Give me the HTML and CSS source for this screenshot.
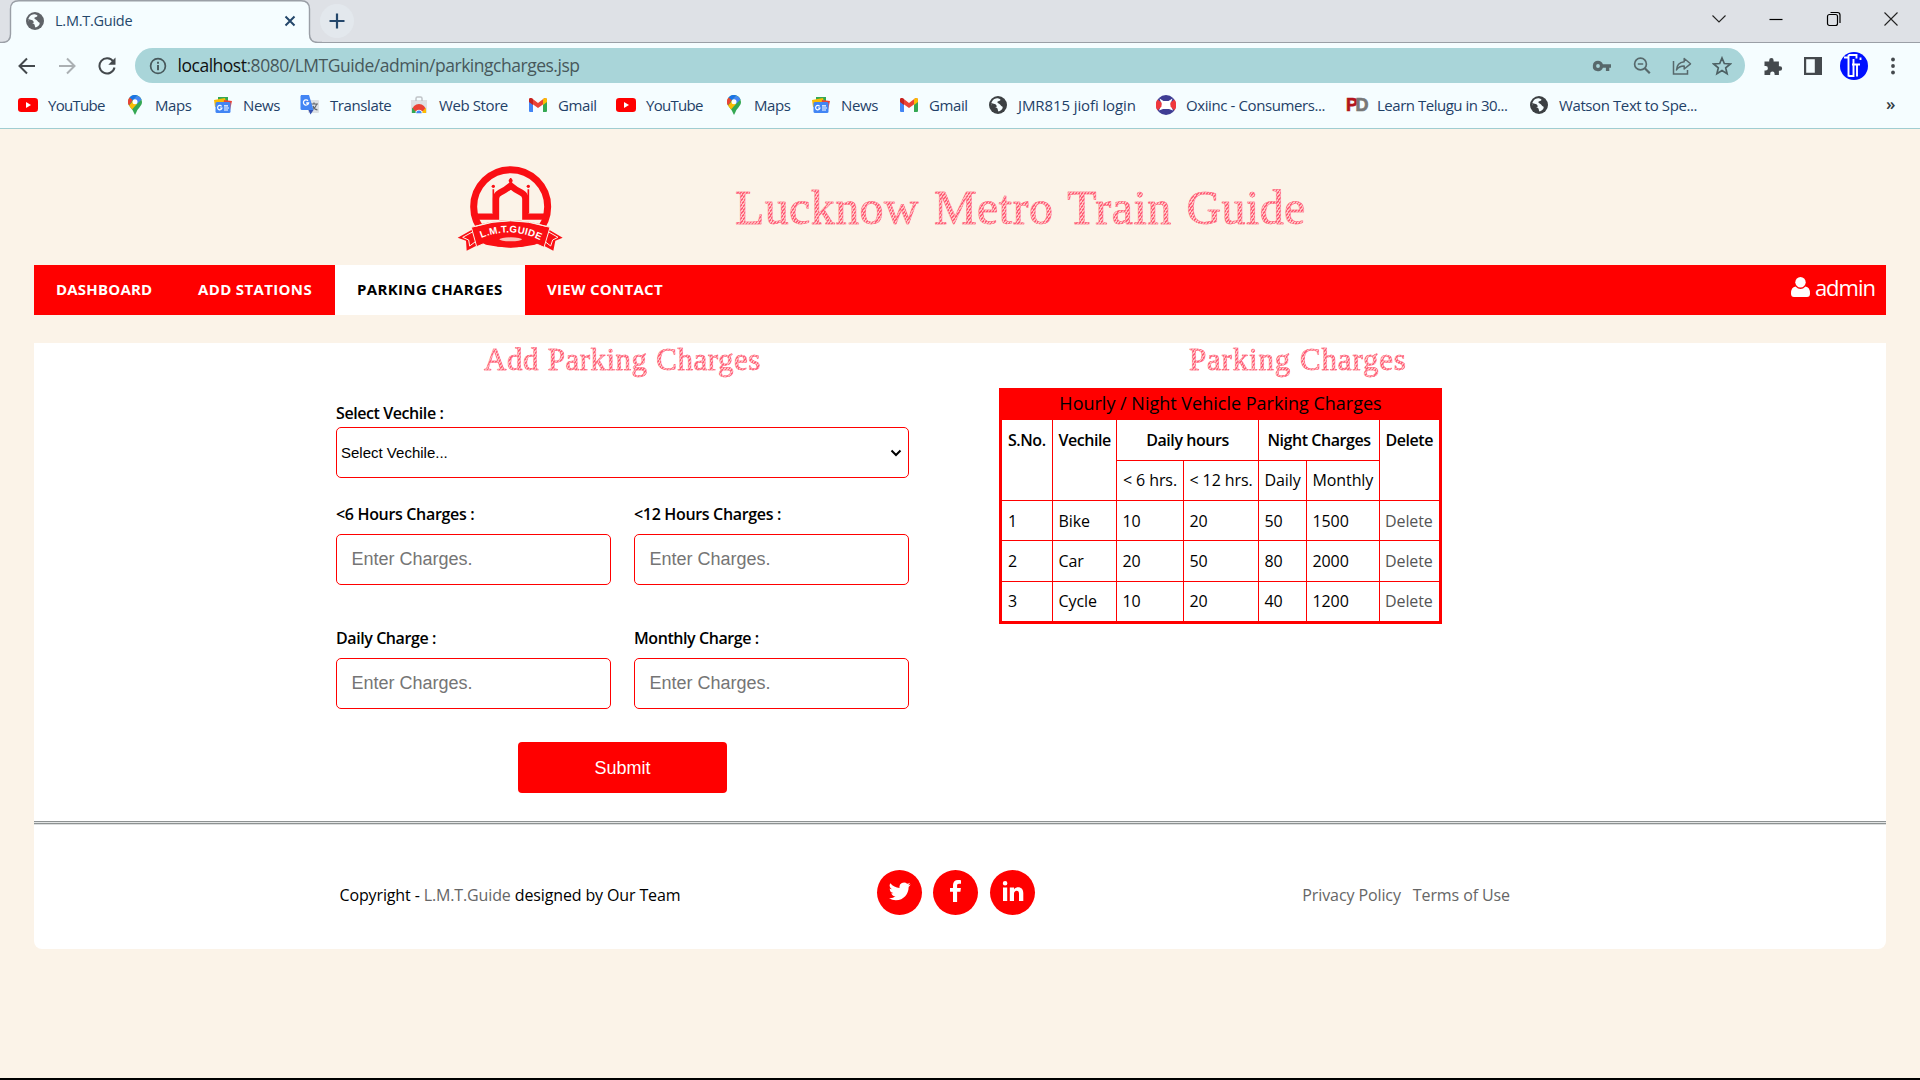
FILE: index.html
```html
<!DOCTYPE html>
<html lang="en">
<head>
<meta charset="utf-8">
<title>L.M.T.Guide</title>
<link rel="stylesheet" href="styles.css">
</head>
<body>
<svg class="defs" width="0" height="0" aria-hidden="true">
  <symbol id="globe" viewBox="0 0 18 18"><circle cx="9" cy="9" r="9" fill="currentColor"/><path d="M8 2.200c2 0 4.500 1.200 3 2.300-1 .8-2.600.6-2.600 1.700S11 7.500 11.500 9s2 1 2.200 2.200c.2 1.600-2 3.700-4 4.300-1-.2-.6-2.300-1.400-3.300-1-1.200-5.800-1.600-6-4C2.300 5 5.200 2.200 8 2.200z" fill="#f5fdff"/><path d="M2 7l4.500 1.200 1.500 2L5.500 12 3 11z" fill="currentColor"/></symbol>
  <symbol id="youtube" viewBox="0 0 20 14"><rect width="20" height="14" rx="3.200" fill="#f00"/><path d="M8 4l5 3-5 3z" fill="#fff"/></symbol>
  <symbol id="maps" viewBox="0 0 14 20"><path d="M7 0a7 7 0 0 0-7 7c0 4 4 6 5.500 10L7 20l1.500-3C10 13 14 11 14 7a7 7 0 0 0-7-7z" fill="#34a853"/><path d="M1 10.500L5 6l4 3-5 5.500z" fill="#fbbc04"/><path d="M1.500 2.600L4.700 5.300 9.200.4A7 7 0 0 0 1.500 2.600z" fill="#1a73e8"/><path d="M1.500 2.600A7 7 0 0 0 1 10.500L4.700 5.300z" fill="#ea4335"/><path d="M9.200.4A7 7 0 0 1 13.500 4.500L9 9 5 5z" fill="#4285f4"/><circle cx="7" cy="6.800" r="2.500" fill="#fff"/></symbol>
  <symbol id="news" viewBox="0 0 18 16"><rect x="4" width="10" height="9" fill="#34a853"/><path d="M0 3l11-2 2 8-12 1z" fill="#fbbc04"/><path d="M10 3l8 1-2 9-7-2z" fill="#ea4335"/><rect x="1.500" y="5" width="15" height="11" rx="1.500" fill="#4285f4"/><path d="M7.600 9.300A2.200 2.200 0 1 0 8 11H6M10 8.800h4M10 11h5M10 13h4" fill="none" stroke="#fff" stroke-width="1.200"/></symbol>
  <symbol id="gmail" viewBox="0 0 18 14"><path d="M0 2v11a1 1 0 0 0 1 1h3V5z" fill="#4285f4"/><path d="M18 2v11a1 1 0 0 1-1 1h-3V5z" fill="#34a853"/><path d="M0 2c0-2 2-2.500 3.500-1.300L9 5l5.500-4.300C16 -.5 18 0 18 2l-1 2.200L9 10 1 4.200z" fill="#ea4335"/><path d="M14 1.100l.5-.4C16-.5 18 0 18 2v2l-4 3z" fill="#fbbc04"/><path d="M0 2C0 0 2-.5 3.500.7l.5.4V7L0 4z" fill="#c5221f"/></symbol>
</svg>

<header class="browser">
  <div class="tabstrip">
    <svg class="tab-shape" width="322" height="43" viewBox="0 0 322 43"><path d="M-1 44V42.500H2Q10.500 42.500 10.500 34V9Q10.500.7 19 .7H301Q309.500.7 309.500 9V34Q309.500 42.500 318 42.500H323V44z" fill="#f5fdff" stroke="#9a9fa6" stroke-width="1.400"/></svg>
    <div class="tab">
      <svg class="c-grey" width="18" height="18"><use href="#globe"/></svg>
      <span class="tab-title">L.M.T.Guide</span>
      <svg width="12" height="12" viewBox="0 0 12 12"><path d="M1.500 1.500l9 9m0-9l-9 9" stroke="#24476b" stroke-width="2"/></svg>
    </div>
    <div class="newtab"><svg width="16" height="16" viewBox="0 0 16 16"><path d="M8 .5v15M.5 8h15" stroke="#24476b" stroke-width="2.200"/></svg></div>
    <div class="winctl">
      <svg width="16" height="16" viewBox="0 0 16 16"><path d="M1.500 4.500L8 11l6.500-6.500" fill="none" stroke="#222" stroke-width="1.100"/></svg>
      <svg width="16" height="16" viewBox="0 0 16 16"><path d="M1.500 8.500h13" stroke="#000" stroke-width="1.200"/></svg>
      <svg width="16" height="16" viewBox="0 0 16 16"><rect x="1.500" y="3.500" width="10" height="11" rx="2" fill="none" stroke="#000" stroke-width="1.200"/><path d="M4.500 1.500h7Q14 1.500 14 4v8" fill="none" stroke="#000" stroke-width="1.200"/></svg>
      <svg width="16" height="16" viewBox="0 0 16 16"><path d="M1.500 1.500l13 13m0-13l-13 13" stroke="#222" stroke-width="1.100"/></svg>
    </div>
  </div>

  <div class="toolbar">
    <svg width="18" height="18" viewBox="0 0 18 18"><path d="M17 9H2M9 1.500L1.500 9 9 16.500" fill="none" stroke="#44494d" stroke-width="2"/></svg>
    <svg width="18" height="18" viewBox="0 0 18 18"><path d="M1 9h15M9 1.500L16.500 9 9 16.500" fill="none" stroke="#abb0b3" stroke-width="2"/></svg>
    <svg width="18" height="18" viewBox="0 0 18 18"><path d="M15.300 4.500A7.600 7.600 0 1 0 16.500 10.500" fill="none" stroke="#44494d" stroke-width="2"/><path d="M17.500.5v7.200h-7.200z" fill="#44494d"/></svg>
    <div class="omnibox">
      <svg width="18" height="18" viewBox="0 0 18 18"><circle cx="9" cy="9" r="7.400" fill="none" stroke="#47585b" stroke-width="1.700"/><path d="M9 8v5.200M9 4.700v2" stroke="#47585b" stroke-width="1.900"/></svg>
      <span class="url"><b>localhost</b>:8080/LMTGuide/admin/parkingcharges.jsp</span>
      <div class="omni-icons">
        <svg width="20" height="20" viewBox="0 0 20 20"><path fill-rule="evenodd" d="M6 4.800a5.200 5.200 0 0 1 4.900 3.500H19v3.500h-1.700V15h-3.400v-3.200h-3A5.200 5.200 0 1 1 6 4.800zm0 3.300a1.900 1.900 0 1 0 0 3.800 1.900 1.900 0 0 0 0-3.800z" fill="#57686b"/></svg>
        <svg width="20" height="20" viewBox="0 0 20 20"><circle cx="8.500" cy="8" r="5.900" fill="none" stroke="#57686b" stroke-width="1.700"/><path d="M12.800 12.300l5 5" stroke="#57686b" stroke-width="2.200"/><path d="M5.800 8h5.400" stroke="#57686b" stroke-width="1.500"/></svg>
        <svg width="20" height="20" viewBox="0 0 20 20"><path d="M1.500 5v13h14v-4" fill="none" stroke="#57686b" stroke-width="1.500"/><path d="M12.200 2.500l6.300 5.300-6.300 5.200V10c-4 0-6 1-7.700 4 .2-4.500 3-7.700 7.700-8.300z" fill="none" stroke="#57686b" stroke-width="1.500" stroke-linejoin="round"/></svg>
        <svg width="20" height="20" viewBox="0 0 20 20"><path d="M10 2l2.300 5.500 6 .5-4.600 3.900 1.400 5.900-5.100-3.200-5.100 3.200 1.400-5.900L1.700 8l6-.5z" fill="none" stroke="#4d6063" stroke-width="1.700"/></svg>
      </div>
    </div>
    <div class="tool-icons">
      <svg class="ext" width="20" height="20" viewBox="0 0 20 20"><path d="M1.500 5.500h4.700V4.200a2.200 2.200 0 0 1 4.400 0v1.300h5.300v4.700h1a2.200 2.200 0 0 1 0 4.500h-1V19h-4.300v-1.200a2.200 2.200 0 0 0-4.400 0V19H1.500v-4.600h1.200a2.200 2.200 0 0 0 0-4.400H1.500z" fill="#44494d"/></svg>
      <svg width="20" height="20" viewBox="0 0 20 20"><path fill-rule="evenodd" d="M1 1h18v18H1zM3.200 3.200v13.600h8.600V3.200z" fill="#44494d"/></svg>
      <svg width="28" height="28" viewBox="0 0 28 28"><circle cx="14" cy="14" r="14" fill="#0010ff"/><path d="M4 5.500h4.500M8.500 3v21.500M8.500 24h5V7M8.500 3h8v3.500M12 12.500h8M17 12v12.500M20.500 5.500v2.500" fill="none" stroke="#fff" stroke-width="1.900"/></svg>
      <svg class="dots" width="20" height="20" viewBox="0 0 20 20"><circle cx="10" cy="3.500" r="1.900" fill="#44494d"/><circle cx="10" cy="10" r="1.900" fill="#44494d"/><circle cx="10" cy="16.500" r="1.900" fill="#44494d"/></svg>
    </div>
  </div>

  <nav class="bookmarks">
    <a class="bm w-yt"><svg width="20" height="14"><use href="#youtube"/></svg><span>YouTube</span></a>
    <a class="bm w-maps"><svg width="14" height="20"><use href="#maps"/></svg><span>Maps</span></a>
    <a class="bm w-news"><svg width="18" height="16"><use href="#news"/></svg><span>News</span></a>
    <a class="bm w-tr"><svg width="20" height="20" viewBox="0 0 20 20"><rect x="8" y="5" width="11" height="13" rx="1" fill="#dde1e5"/><path d="M10 9h8M14 7.500V9m2.500 0c-.5 3-3 5-5 6m1.500-4c.5 2 2.500 3.500 4.500 4" fill="none" stroke="#5f6368" stroke-width="1.200"/><path d="M1 0h8l4.500 15H2a1.500 1.500 0 0 1-1.500-1.500V1.500z" fill="#4285f4"/><path d="M8.500 15h5l-3 4.500z" fill="#3450b0"/><path d="M8 5.700A2.600 2.600 0 1 0 8.600 8H6.200" fill="none" stroke="#fff" stroke-width="1.300"/></svg><span>Translate</span></a>
    <a class="bm w-ws"><svg width="18" height="18" viewBox="0 0 18 18"><path d="M1 4h16v13H1z" fill="#dfe1e3"/><path d="M6 5V2.500Q6 1 7.500 1h3Q12 1 12 2.500V5" fill="none" stroke="#c0c4c8" stroke-width="1.500"/><path d="M2 15a7 7 0 0 1 14 0z" fill="#ea4335"/><path d="M2 11.500L7 17H2z" fill="#34a853"/><path d="M16 11.500L11 17h5z" fill="#fbbc04"/><path d="M5.500 17.200a3.500 3.500 0 1 1 7 0z" fill="#fff"/><path d="M6.300 17.200a2.700 2.700 0 1 1 5.400 0z" fill="#4285f4"/></svg><span>Web Store</span></a>
    <a class="bm w-gm"><svg width="18" height="14"><use href="#gmail"/></svg><span>Gmail</span></a>
    <a class="bm w-yt2"><svg width="20" height="14"><use href="#youtube"/></svg><span>YouTube</span></a>
    <a class="bm w-maps"><svg width="14" height="20"><use href="#maps"/></svg><span>Maps</span></a>
    <a class="bm w-news2"><svg width="18" height="16"><use href="#news"/></svg><span>News</span></a>
    <a class="bm w-gm2"><svg width="18" height="14"><use href="#gmail"/></svg><span>Gmail</span></a>
    <a class="bm w-jmr"><svg class="c-dark" width="18" height="18"><use href="#globe"/></svg><span class="wide">JMR815 jiofi login</span></a>
    <a class="bm w-ox"><svg width="20" height="20" viewBox="0 0 20 20"><circle cx="10" cy="10" r="10" fill="#3f3d94"/><path d="M3.500 3.500l4 2.500h5l4-2.500-2 5.500 2.500 6.500-4-1.500H7l-4 1.500L5.500 9z" fill="#fff"/><path d="M1.500 4.500l4 3v4l-4 4A10 10 0 0 1 1.500 4.500zM18.500 4.500l-4 3v4l4 4A10 10 0 0 0 18.500 4.500z" fill="#f0383c"/></svg><span>Oxiinc - Consumers...</span></a>
    <a class="bm w-pd"><span class="pd"><i>P</i>D</span><span>Learn Telugu in 30...</span></a>
    <a class="bm w-wat"><svg class="c-dark" width="18" height="18"><use href="#globe"/></svg><span>Watson Text to Spe...</span></a>
    <span class="more">»</span>
  </nav>
</header>

<main class="page">
  <div class="masthead">
    <svg class="logo" width="140" height="110" viewBox="0 0 420 330">
      <circle cx="212" cy="170" r="111" fill="none" stroke="#fa0f14" stroke-width="21"/>
      <path d="M106 200H168V146Q168 134 180 128Q200 118 212 107Q224 118 244 128Q256 134 256 146V200H320" fill="none" stroke="#fa0f14" stroke-width="19"/>
      <path d="M160 190V118M265 190V118M212 108V84" stroke="#fa0f14" stroke-width="5"/>
      <circle cx="160" cy="109" r="5" fill="#fa0f14"/><circle cx="265" cy="109" r="5" fill="#fa0f14"/><circle cx="212" cy="92" r="6" fill="#fa0f14"/>
      <path d="M112 230L53 263 78 272 80 302 150 266zM312 230L368 263 346 272 340 302 272 266z" fill="#fa0f14"/>
      <path d="M108 240L68 262 86 270 89 288 118 266M316 240L354 262 338 270 332 288 304 266" fill="none" stroke="#fbf3e8" stroke-width="3"/>
      <path d="M112 268Q212 225 312 268L290 276Q212 310 134 276z" fill="#fa0f14"/>
      <path d="M94 232Q212 190 330 232L312 292Q212 240 110 290z" fill="#fa0f14" stroke="#fbf3e8" stroke-width="3"/>
      <path d="M106 229Q212 196 318 229" fill="none" stroke="#fbf3e8" stroke-width="3"/>
      <path d="M122 276Q212 232 302 276L284 284Q212 300 138 284z" fill="#fa0f14"/>
      <ellipse cx="212" cy="268" rx="34" ry="6" fill="#fbc0b8"/>
      <path id="arc" d="M124 264Q212 228 300 270" fill="none"/>
      <text class="logo-text"><textPath href="#arc" textLength="182">L.M.T.GUIDE</textPath></text>
    </svg>
    <h1 class="sketch title">Lucknow Metro Train Guide</h1>
  </div>

  <nav class="menu">
    <a class="item i1">DASHBOARD</a>
    <a class="item i2">ADD STATIONS</a>
    <a class="item i3 active">PARKING CHARGES</a>
    <a class="item i4">VIEW CONTACT</a>
    <div class="user">
      <svg width="19" height="20" viewBox="0 0 19 20"><path d="M4.500 9.500Q9.500 14.500 14.500 9.500Q19 10 19 16.500 19 20 16 20H3Q0 20 0 16.500 0 10 4.500 9.500z" fill="#fff"/><circle cx="9.500" cy="5.200" r="5.200" fill="#fff"/></svg>
      <span>admin</span>
    </div>
  </nav>

  <div class="panel">
    <div class="columns">
      <form class="form">
        <h2 class="sketch sub">Add Parking Charges</h2>
        <label class="lbl lbl-select">Select Vechile :</label>
        <div class="select"><span>Select Vechile...</span><svg width="12" height="8" viewBox="0 0 12 8"><path d="M1.500 1.500L6 6l4.500-4.500" fill="none" stroke="#000" stroke-width="2"/></svg></div>
        <div class="pair">
          <div class="field"><label class="lbl lbl-w">&lt;6 Hours Charges :</label><input class="inp" placeholder="Enter Charges."></div>
          <div class="field"><label class="lbl lbl-w">&lt;12 Hours Charges :</label><input class="inp" placeholder="Enter Charges."></div>
        </div>
        <div class="pair pair2">
          <div class="field"><label class="lbl">Daily Charge :</label><input class="inp" placeholder="Enter Charges."></div>
          <div class="field"><label class="lbl">Monthly Charge :</label><input class="inp" placeholder="Enter Charges."></div>
        </div>
        <button class="submit" type="button">Submit</button>
      </form>

      <section class="rates">
        <h2 class="sketch sub sub-r">Parking Charges</h2>
        <div class="table-box">
          <div class="table-title">Hourly / Night Vehicle Parking Charges</div>
          <table class="tbl">
            <colgroup><col class="c1"><col class="c2"><col class="c3"><col class="c4"><col class="c5"><col class="c6"><col class="c7"></colgroup>
            <tr><th rowspan="2">S.No.</th><th rowspan="2">Vechile</th><th class="mid" colspan="2">Daily hours</th><th class="mid" colspan="2">Night Charges</th><th rowspan="2">Delete</th></tr>
            <tr><td class="in">&lt; 6 hrs.</td><td>&lt; 12 hrs.</td><td>Daily</td><td>Monthly</td></tr>
            <tr class="low"><td>1</td><td>Bike</td><td>10</td><td>20</td><td>50</td><td>1500</td><td class="del">Delete</td></tr>
            <tr class="low tall"><td>2</td><td>Car</td><td>20</td><td>50</td><td>80</td><td>2000</td><td class="del">Delete</td></tr>
            <tr><td>3</td><td>Cycle</td><td>10</td><td>20</td><td>40</td><td>1200</td><td class="del">Delete</td></tr>
          </table>
        </div>
      </section>
    </div>

    <div class="rule"></div>

    <footer class="footer">
      <p class="copy">Copyright - <a>L.M.T.Guide</a> designed by Our Team</p>
      <div class="social">
        <a><svg width="22" height="22" viewBox="0 0 24 24"><path d="M23.600 4.900a9.700 9.700 0 0 1-2.800.8 4.900 4.900 0 0 0 2.100-2.700 9.800 9.800 0 0 1-3.100 1.200 4.900 4.900 0 0 0-8.300 4.400A13.800 13.800 0 0 1 1.500 3.500a4.900 4.900 0 0 0 1.500 6.500 4.800 4.800 0 0 1-2.200-.6 4.900 4.900 0 0 0 3.900 4.900 4.900 4.900 0 0 1-2.200.1 4.900 4.900 0 0 0 4.600 3.400A9.800 9.800 0 0 1 0 19.800a13.800 13.800 0 0 0 7.500 2.200c9 0 14.200-7.600 13.900-14.500a10 10 0 0 0 2.200-2.600z" fill="#fff"/></svg></a>
        <a><svg width="22" height="22" viewBox="0 0 22 22"><path d="M16 .2v3.500h-2c-1.600 0-1.900.8-1.900 1.900v2.300h3.800l-.5 3.800h-3.300V22H8V11.700H5V7.900h3V5.100C8 1.900 10 0 13 0c1.400 0 2.600.1 3 .2z" fill="#fff"/></svg></a>
        <a><svg class="li" width="22" height="22" viewBox="0 0 22 22"><path d="M1 7.500h4.200V21H1zM3.100 1a2.300 2.300 0 1 1 0 4.600 2.300 2.300 0 0 1 0-4.600zM7.800 7.500H12v1.900c.7-1.200 2-2.200 4-2.200 3.500 0 5.300 2.200 5.300 6V21H17v-7.200c0-1.900-.7-3.100-2.300-3.100S12 12 12 13.800V21H7.800z" fill="#fff"/></svg></a>
      </div>
      <div class="links"><a>Privacy Policy</a><a>Terms of Use</a></div>
    </footer>
  </div>
</main>
<div class="bottom-edge"></div>
</body>
</html>
```
FILE: styles.css
```css
* { box-sizing: border-box; }
body {
  margin: 0;
  width: 1920px;
  height: 1080px;
  overflow: hidden;
  display: flex;
  flex-direction: column;
  background: #fbf3e8;
  font-family: "Open Sans", "Noto Sans", sans-serif;
  color: #000;
}
svg { display: block; flex: none; }
h1, h2, p { margin: 0; }
.defs { position: absolute; }
.c-grey { color: #5f6368; }
.c-dark { color: #3c4043; }

/* browser window */
.browser { flex: none; height: 129px; background: #f5fdff; border-bottom: 1px solid #a0cdd1; }
.tabstrip { position: relative; display: flex; height: 43px; background: #dee1e6; border-bottom: 1px solid #9a9fa6; }
.tab-shape { position: absolute; left: 0; top: 0; }
.tab { position: relative; display: flex; align-items: center; width: 310px; height: 42px; padding: 0 14px 0 26px; }
.tab-title { flex: 1; margin: -2px 0 0 11px; font-size: 14.500px; letter-spacing: -.25px; color: #24476b; }
.newtab { position: relative; display: flex; align-items: center; justify-content: center; width: 34px; height: 34px; margin: 4px 0 0 10px; border-radius: 50%; background: #e3e8ed; }
.winctl { display: flex; gap: 41.300px; margin: 11px 21px 0 auto; }

.toolbar { display: flex; align-items: center; height: 45px; padding: 0 18px; gap: 22px; }
.omnibox { flex: none; display: flex; align-items: center; width: 1609.500px; height: 35px; padding: 0 12.500px 0 14px; margin-left: -3px; border-radius: 18px; background: #a9d5d9; }
.url { margin: -2px 0 0 10.500px; font-size: 17.500px; letter-spacing: -.48px; color: #47585b; }
.url b { font-weight: 400; color: #111; }
.omni-icons { display: flex; gap: 20px; margin-left: auto; }
.tool-icons { flex: none; display: flex; align-items: center; gap: 17px; margin-left: -4px; }
.ext { margin-right: 3px; }
.dots { margin-left: -2px; }

.bookmarks { display: flex; align-items: center; height: 40px; padding-left: 18px; margin-top: -3px; }
.bm { display: flex; align-items: center; gap: 10px; flex: none; font-size: 15px; letter-spacing: -.4px; color: #1f4168; white-space: nowrap; }
.wide { letter-spacing: -.1px; }
.w-yt, .w-yt2 { width: 111px; }
.w-yt span, .w-yt2 span { letter-spacing: -.7px; }
.w-maps { width: 85px; gap: 13px; }
.w-yt + .w-maps { margin-left: -1px; margin-right: 1px; }
.w-news { width: 86px; gap: 11px; }
.w-tr { width: 110px; }
.w-ws { width: 119px; gap: 11px; }
.w-gm { width: 87px; gap: 11px; }
.w-news2 { width: 88px; gap: 11px; }
.w-gm2 { width: 89px; gap: 11px; }
.w-jmr { width: 167px; gap: 11px; }
.w-ox { width: 190px; }
.w-pd { width: 184px; }
.w-pd > span:last-child { letter-spacing: -.48px; }
.w-wat { width: 361px; gap: 11px; }
.pd { width: 21px; font: bold 18px/20px "Liberation Sans", sans-serif; letter-spacing: -2.500px; color: #777; -webkit-text-stroke: .7px currentColor; }
.pd i { font-style: normal; color: #b3141c; }
.more { margin-left: -5px; margin-top: -3px; font-size: 17px; font-weight: 600; color: #333c44; }

/* page */
.page { width: 1852px; margin: 0 auto; }
.masthead { display: flex; height: 136px; padding-left: 406px; }
.logo { margin-top: 21px; }
.logo-text { font: bold 29px "Liberation Sans", sans-serif; fill: #fff; }
.sketch {
  font-family: "Liberation Serif", serif;
  font-weight: 400;
  white-space: nowrap;
  color: transparent;
  background: repeating-linear-gradient(125deg, #ff5f78 0 1.200px, #ffc4c4 1.200px 2.500px);
  -webkit-background-clip: text;
  background-clip: text;
  -webkit-text-stroke: .5px #ff7085;
}
.title { height: 60px; margin: 49px 0 0 155px; font-size: 48px; line-height: 60px; letter-spacing: .4px; word-spacing: 2.500px; }

.menu { display: flex; height: 50px; background: #f00; }
.item { padding: 0 0 0 22px; font-weight: 700; font-size: 15px; line-height: 49px; letter-spacing: .28px; color: #fff; white-space: nowrap; }
.i1 { width: 142px; letter-spacing: .2px; }
.i2 { width: 159px; letter-spacing: .35px; }
.i3 { width: 190px; letter-spacing: .35px; }
.i4 { width: 160px; }
.active { background: #fff; color: #000; }
.user { display: flex; align-items: center; gap: 5px; margin-left: auto; padding: 0 11px 6px 0; font-size: 22px; letter-spacing: -1px; color: #fff; }

.panel { height: 606px; margin-top: 28px; background: #fff; border-radius: 0 0 8px 8px; }
.columns { display: flex; height: 478px; padding-left: 302px; }
.form { width: 573px; }
.sub { width: max-content; height: 36px; margin: 0 0 0 148px; font-size: 31px; line-height: 34px; letter-spacing: .5px; word-spacing: .5px; }
.sub-r { margin-left: 190px; letter-spacing: .8px; }
.lbl { display: block; height: 24px; font-size: 16px; font-weight: 600; line-height: 24px; letter-spacing: -.42px; }
.lbl-w { letter-spacing: -.33px; }
.lbl-select { margin-top: 22px; }
.select { display: flex; align-items: center; justify-content: space-between; height: 51px; margin-top: 2px; padding: 0 6px 0 4px; border: 1px solid #f00; border-radius: 5px; font: 15px "Liberation Sans", sans-serif; }
.pair { display: flex; gap: 23px; margin-top: 24px; }
.pair2 { margin-top: 41px; }
.field { flex: 1; }
.inp { display: block; width: 100%; height: 51px; margin-top: 8px; padding: 0 14.500px; border: 1px solid #f00; border-radius: 5px; font: 18px "Liberation Sans", sans-serif; background: #fff; }
.inp::placeholder { color: #757575; }
.submit { display: block; width: 209px; height: 51px; margin: 33px auto 0; padding-top: 3px; border: 0; border-radius: 4px; background: #f00; color: #fff; font: 18px "Liberation Sans", sans-serif; }

.rates { margin-left: 90px; }
.table-box { width: 443px; margin-top: 9px; border: 3px solid #f00; border-top: 0; }
.table-title { height: 32px; background: #f00; font-size: 18px; line-height: 30px; text-align: center; }
.tbl { table-layout: fixed; width: 437px; border-collapse: separate; border-spacing: 0; font-size: 16px; letter-spacing: -.1px; }
.tbl td, .tbl th { height: 40px; padding: 0 0 0 6px; border-left: 1px solid #f00; border-top: 1px solid #f00; line-height: 38px; text-align: left; vertical-align: top; white-space: nowrap; }
.tbl tr > :first-child:not(.in) { border-left: 0; }
.tbl tr:first-child th { border-top: 0; }
.tbl tr > :not(:first-child) { padding-left: 5.500px; }
.tbl th { font-weight: 600; letter-spacing: -.45px; line-height: 40px; }
.tbl tr > .mid { padding: 0; text-align: center; }
.tbl .low td { padding-top: 1px; }
.tbl .tall td { height: 41px; }
.tbl .del { color: #555; }
.tbl tr > .del { padding-left: 5px; }
.c1 { width: 50px; }
.c2 { width: 64px; }
.c3 { width: 67px; }
.c4 { width: 75px; }
.c5 { width: 48px; }
.c6 { width: 73px; }
.c7 { width: 60px; }

.rule { height: 4px; border-top: 1px solid #8d9292; border-bottom: 1px solid #dcdede; background: linear-gradient(#e3e5e5 50%, #8d9292 50%); }
.footer { display: flex; align-items: flex-start; padding: 45px 376px 0 305.500px; font-size: 16px; line-height: 24px; }
.copy { width: 537.500px; margin-top: 13px; letter-spacing: -.13px; }
.footer a { color: #666; }
.social { display: flex; gap: 11.400px; }
.social a { display: flex; align-items: center; justify-content: center; width: 45px; height: 45px; padding-bottom: 3px; border-radius: 50%; background: #f00; }
.li { margin-left: 1px; }
.links { display: flex; gap: 12px; margin: 13px 0 0 auto; letter-spacing: -.1px; white-space: nowrap; }
.bottom-edge { height: 2px; margin-top: auto; background: #000; }
```
